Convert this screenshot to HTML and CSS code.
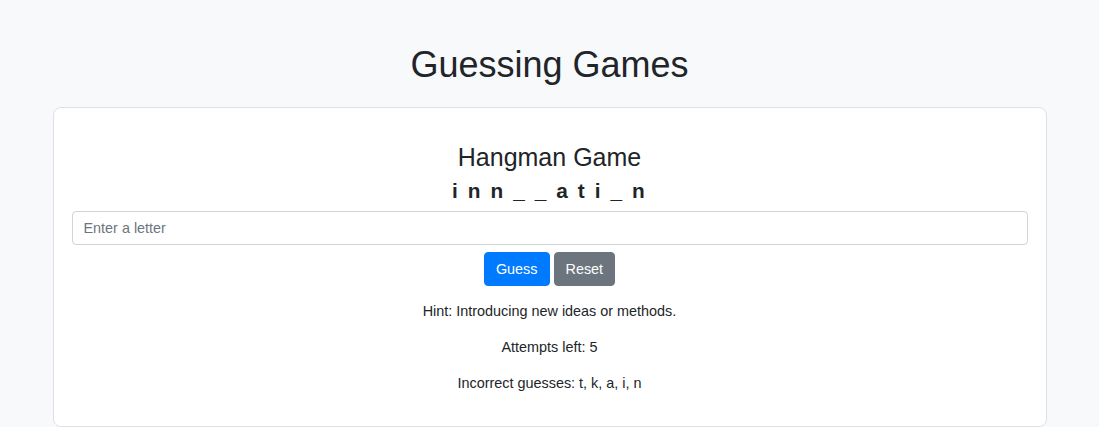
FILE: index.html
```html
<!DOCTYPE html>
<html lang="en">
<head>
<meta charset="utf-8">
<title>Guessing Games</title>
<link rel="stylesheet" href="styles.css">
</head>
<body>
<div class="page">
  <h1 class="page-title">Guessing Games</h1>
  <div class="card">
    <h2 class="game-title">Hangman Game</h2>
    <div class="word">i n n _ _ a t i _ n</div>
    <input class="letter-input" type="text" placeholder="Enter a letter">
    <div class="actions">
      <button class="btn btn-primary">Guess</button>
      <button class="btn btn-secondary">Reset</button>
    </div>
    <p class="info">Hint: Introducing new ideas or methods.</p>
    <p class="info">Attempts left: 5</p>
    <p class="info">Incorrect guesses: t, k, a, i, n</p>
  </div>
</div>
</body>
</html>
```

FILE: styles.css
```css
* { box-sizing: border-box; }
html, body { margin: 0; padding: 0; }
body {
  background: #f8f9fa;
  color: #212529;
  font-family: "Liberation Sans", Arial, Helvetica, sans-serif;
  font-size: 16px;
}
.page {
  max-width: 994px;
  margin: 0 auto;
  padding-top: 43px;
  text-align: center;
}
.page-title {
  font-size: 36px;
  font-weight: 400;
  line-height: 43px;
  margin: 0 0 21px;
}
.card {
  background: #fff;
  border: 1px solid #dfe0e5;
  border-radius: 8px;
  padding: 18px 18px 17px;
}
.game-title {
  font-size: 25px;
  font-weight: 400;
  line-height: 30px;
  margin: 16px 0 6px;
}
.word {
  font-size: 20.8px;
  font-weight: 700;
  letter-spacing: 2.1px;
  line-height: 25px;
  margin: 0 0 8px;
}
.letter-input {
  display: block;
  width: 100%;
  height: 34px;
  padding: 0 11px;
  font-family: inherit;
  font-size: 14.4px;
  color: #495057;
  background: #fff;
  border: 1px solid #ced4da;
  border-radius: 4px;
  outline: none;
}
.letter-input::placeholder { color: #6c757d; opacity: 1; }
.actions {
  display: flex;
  justify-content: center;
  gap: 4px;
  margin-top: 7px;
  padding-bottom: 1px;
}
.btn {
  height: 34px;
  padding: 0 11px;
  font-family: inherit;
  font-size: 14.4px;
  line-height: 32px;
  color: #fff;
  border-radius: 4px;
  cursor: pointer;
}
.btn-primary { background: #007bff; border: 1px solid #007bff; }
.btn-secondary { background: #6c757d; border: 1px solid #6c757d; }
.info {
  font-size: 14.4px;
  line-height: 21.6px;
  margin: 14.4px 0;
}
```
